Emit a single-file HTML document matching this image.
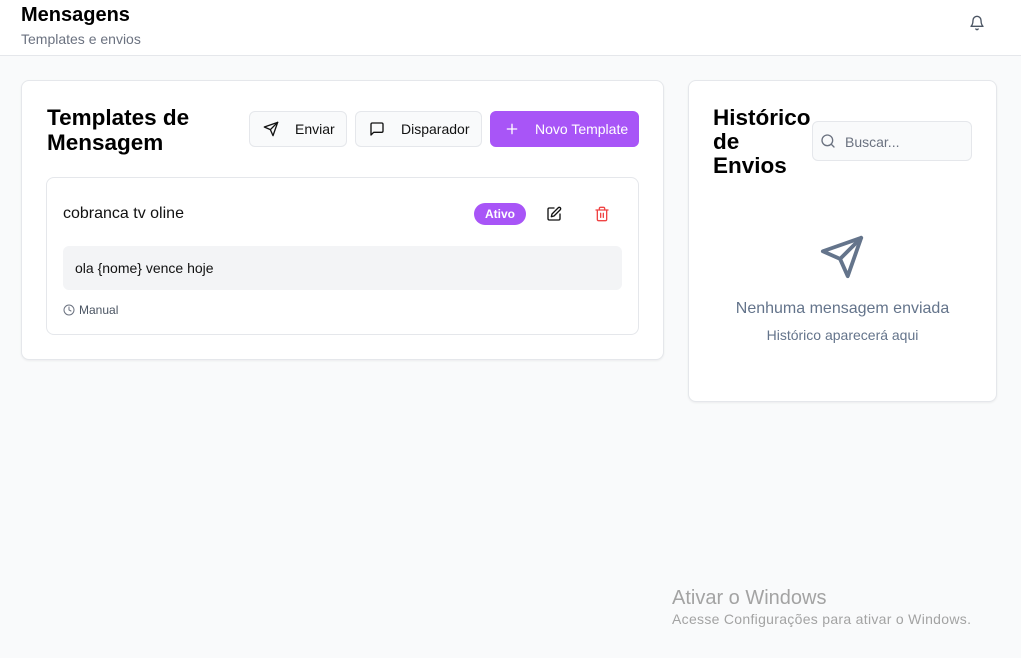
<!DOCTYPE html>
<html><head><meta charset="utf-8"><style>
*{box-sizing:border-box;margin:0;padding:0}
body{width:1021px;height:658px;background:#f9fafb;font-family:"Liberation Sans",sans-serif;position:relative;overflow:hidden;color:#111}
.a{position:absolute}
.hdr{left:0;top:0;width:1021px;height:56px;background:#fff;border-bottom:1px solid #e5e7eb}
.card{background:#fff;border:1px solid #e5e7eb;border-radius:8px;box-shadow:0 1px 2px rgba(0,0,0,.06)}
.btn{height:36px;border:1px solid #e5e7eb;border-radius:6px;background:#f9fafb;display:flex;align-items:center;font-size:14px;color:#111}
svg{display:block}
</style></head><body>
<div class="a hdr"></div>
<div class="a" style="left:21px;top:4px;font-size:20px;font-weight:bold;color:#000">Mensagens</div>
<div class="a" style="left:21px;top:31px;font-size:14px;color:#6b7280">Templates e envios</div>
<svg class="a" style="left:969px;top:15px" width="16" height="16" viewBox="0 0 24 24" fill="none" stroke="#4b5563" stroke-width="2" stroke-linecap="round" stroke-linejoin="round"><path d="M6 8a6 6 0 0 1 12 0c0 7 3 9 3 9H3s3-2 3-9"/><path d="M10.3 21a1.94 1.94 0 0 0 3.4 0"/></svg>

<div class="a card" style="left:21px;top:80px;width:643px;height:280px"></div>
<div class="a" style="left:47px;top:105px;font-size:22.5px;font-weight:bold;line-height:25px;color:#000">Templates de<br>Mensagem</div>
<div class="a btn" style="left:249px;top:111px;width:98px">
<svg style="margin-left:13px" width="16" height="16" viewBox="0 0 24 24" fill="none" stroke="#111" stroke-width="2" stroke-linecap="round" stroke-linejoin="round"><path d="M22 2 11 13"/><path d="M22 2 15 22 11 13 2 9z"/></svg><span style="margin-left:16px">Enviar</span></div>
<div class="a btn" style="left:355px;top:111px;width:127px">
<svg style="margin-left:13px" width="16" height="16" viewBox="0 0 24 24" fill="none" stroke="#111" stroke-width="2" stroke-linecap="round" stroke-linejoin="round"><path d="M21 15a2 2 0 0 1-2 2H7l-4 4V5a2 2 0 0 1 2-2h14a2 2 0 0 1 2 2z"/></svg><span style="margin-left:16px">Disparador</span></div>
<div class="a btn" style="left:490px;top:111px;width:149px;background:#a855f7;border-color:#a855f7;color:#fff">
<svg style="margin-left:13px" width="16" height="16" viewBox="0 0 24 24" fill="none" stroke="#fff" stroke-width="2" stroke-linecap="round"><path d="M12 5v14M5 12h14"/></svg><span style="margin-left:15px">Novo Template</span></div>

<div class="a card" style="left:46px;top:177px;width:593px;height:158px;box-shadow:none"></div>
<div class="a" style="left:63px;top:205px;font-size:16px">cobranca tv oline</div>
<div class="a" style="left:474px;top:203px;width:52px;height:22px;border-radius:11px;background:#a855f7;color:#fff;font-size:12px;font-weight:bold;text-align:center;line-height:22px">Ativo</div>
<svg class="a" style="left:546px;top:206px" width="16" height="16" viewBox="0 0 24 24" fill="none" stroke="#111" stroke-width="2" stroke-linecap="round" stroke-linejoin="round"><path d="M12 3H5a2 2 0 0 0-2 2v14a2 2 0 0 0 2 2h14a2 2 0 0 0 2-2v-7"/><path d="M18.4 2.6a2.1 2.1 0 0 1 3 3L12 15l-4 1 1-4z"/></svg>
<svg class="a" style="left:594px;top:206px" width="16" height="16" viewBox="0 0 24 24" fill="none" stroke="#ef4444" stroke-width="2" stroke-linecap="round" stroke-linejoin="round"><path d="M3 6h18"/><path d="M19 6v14a2 2 0 0 1-2 2H7a2 2 0 0 1-2-2V6"/><path d="M8 6V4a2 2 0 0 1 2-2h4a2 2 0 0 1 2 2v2"/><path d="M10 11v6M14 11v6"/></svg>
<div class="a" style="left:63px;top:246px;width:559px;height:44px;background:#f3f4f6;border-radius:6px;font-size:14px;line-height:44px;padding-left:12px">ola {nome} vence hoje</div>
<svg class="a" style="left:63px;top:304px" width="12" height="12" viewBox="0 0 24 24" fill="none" stroke="#6b7280" stroke-width="2" stroke-linecap="round"><circle cx="12" cy="12" r="10"/><path d="M12 6v6l4 2"/></svg>
<div class="a" style="left:79px;top:303px;font-size:12px;color:#4b5563">Manual</div>

<div class="a card" style="left:688px;top:80px;width:309px;height:322px"></div>
<div class="a" style="left:713px;top:106px;font-size:22.5px;font-weight:bold;line-height:24px;color:#000">Histórico<br>de<br>Envios</div>
<div class="a" style="left:812px;top:121px;width:160px;height:40px;border:1px solid #e5e7eb;border-radius:6px;background:#f9fafb"></div>
<svg class="a" style="left:820px;top:133px" width="16" height="16" viewBox="0 0 24 24" fill="none" stroke="#6b7280" stroke-width="2" stroke-linecap="round"><circle cx="11" cy="11" r="8"/><path d="m21 21-4.3-4.3"/></svg>
<div class="a" style="left:845px;top:134px;font-size:14px;color:#6b7280">Buscar...</div>
<svg class="a" style="left:819px;top:234px" width="46" height="46" viewBox="0 0 24 24" fill="none" stroke="#64748b" stroke-width="2" stroke-linecap="round" stroke-linejoin="round"><path d="M22 2 11 13"/><path d="M22 2 15 22 11 13 2 9z"/></svg>
<div class="a" style="left:688px;width:309px;top:300px;text-align:center;font-size:16px;color:#64748b">Nenhuma mensagem enviada</div>
<div class="a" style="left:688px;width:309px;top:327px;text-align:center;font-size:14px;color:#64748b">Histórico aparecerá aqui</div>

<div class="a" style="left:672px;top:587px;font-size:20px;color:#a3a3a3">Ativar o Windows</div>
<div class="a" style="left:672px;top:611px;font-size:14px;letter-spacing:0.3px;color:#a3a3a3">Acesse Configurações para ativar o Windows.</div>
</body></html>
